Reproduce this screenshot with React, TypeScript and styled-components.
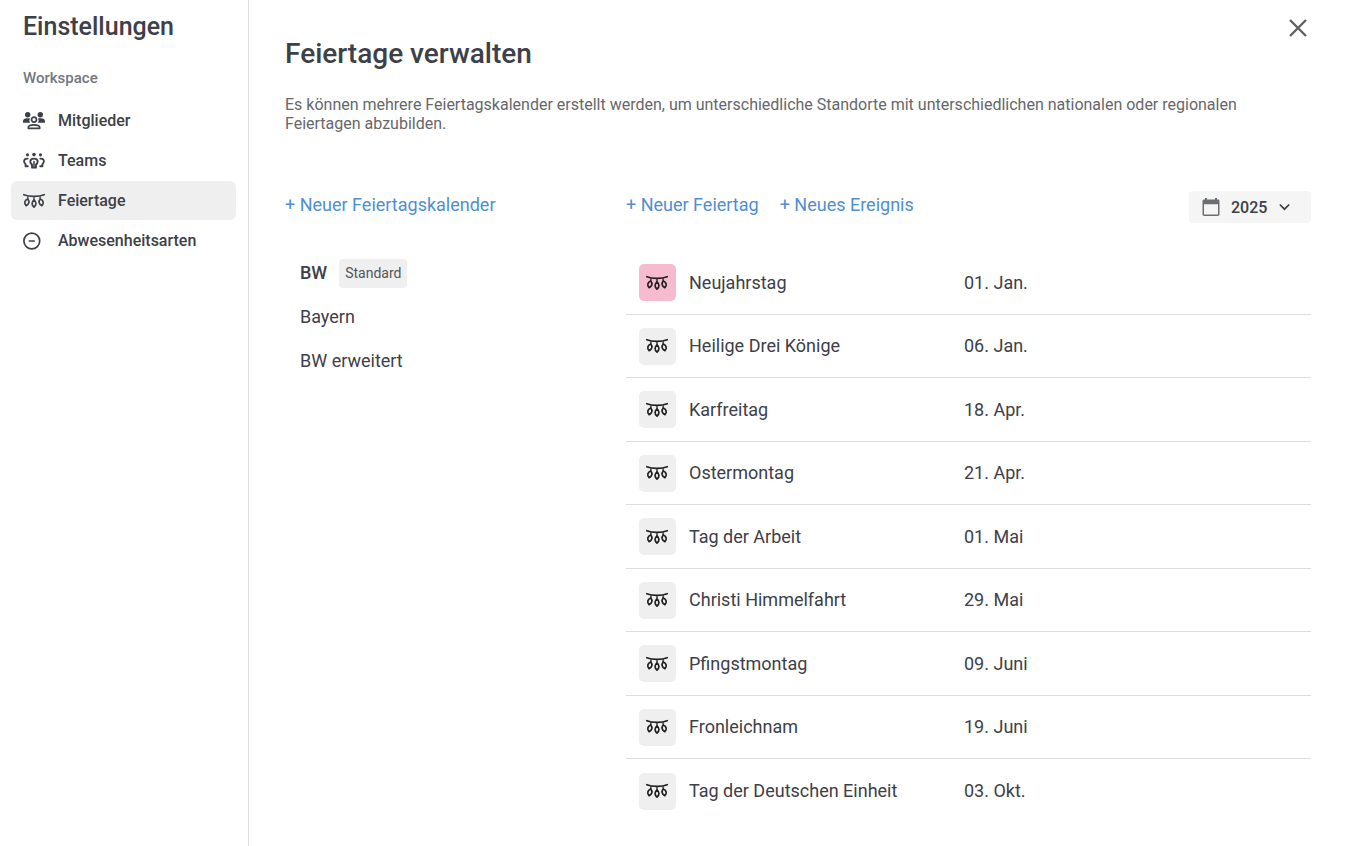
import React, { useState } from 'react';
import styled, { createGlobalStyle } from 'styled-components';

const GlobalStyle = createGlobalStyle`
  *, *::before, *::after { box-sizing: border-box; }
  body {
    margin: 0;
    background: #fff;
    color: #3d4048;
    font-family: Roboto, "Liberation Sans", sans-serif;
    font-size: 18px;
  }
  button, select { font: inherit; color: inherit; }
`;

const Page = styled.div`
  display: flex;
  min-height: 100vh;
`;

const Sidebar = styled.aside`
  flex: none;
  width: 249px;
  padding: 11px 12px 0 11px;
  border-right: 1px solid #dedede;
`;

const SidebarTitle = styled.h2`
  margin: 0;
  padding-left: 12px;
  font-size: 25px;
  font-weight: 500;
  line-height: 32px;
`;

const SectionLabel = styled.h3`
  margin: 25px 0 13px;
  padding-left: 12px;
  color: #74777e;
  font-size: 15px;
  font-weight: 500;
  line-height: 20px;
`;

const NavList = styled.ul`
  display: flex;
  flex-direction: column;
  gap: 1px;
  margin: 0;
  padding: 0;
  list-style: none;
`;

const NavLink = styled.a<{ $active?: boolean }>`
  display: flex;
  align-items: center;
  gap: 13px;
  height: 39px;
  padding: 0 12px;
  border-radius: 6px;
  background: ${({ $active }) => ($active ? '#efefef' : 'transparent')};
  color: inherit;
  font-size: 16px;
  font-weight: 500;
  line-height: 20px;
  text-decoration: none;
`;

const Main = styled.main`
  flex: 1;
  min-width: 0;
  padding: 16px 34px 24px 36px;
`;

const Header = styled.header`
  display: flex;
  align-items: flex-start;
  justify-content: space-between;
`;

const Title = styled.h1`
  margin: 20px 0 0;
  font-size: 28px;
  font-weight: 500;
  line-height: 36px;
`;

const CloseButton = styled.button`
  display: flex;
  padding: 0;
  border: 0;
  background: none;
  color: #616161;
  cursor: pointer;
`;

const Intro = styled.p`
  max-width: 1000px;
  margin: 23px 0 0;
  color: #66676b;
  font-size: 16px;
  line-height: 19px;
`;

const Columns = styled.div`
  display: flex;
  margin-top: 58px;
`;

const CalendarColumn = styled.section`
  flex: none;
  width: 341px;
`;

const HolidayColumn = styled.section`
  flex: 1;
  min-width: 0;
`;

const Toolbar = styled.div`
  display: flex;
  align-items: center;
  gap: 21px;
  height: 32px;
`;

const TextButton = styled.button`
  margin: 0 0 4px;
  padding: 0;
  border: 0;
  background: none;
  color: #4f8fd0;
  font-size: 18px;
  line-height: 24px;
  cursor: pointer;
`;

const YearPicker = styled.label`
  position: relative;
  margin-left: auto;
`;

const YearSelect = styled.select`
  display: block;
  width: 122px;
  height: 32px;
  padding: 0 42px;
  border: 0;
  border-radius: 4px;
  background: #f5f5f5;
  appearance: none;
  font-size: 16px;
  font-weight: 500;
`;

const PickerIcon = styled.span<{ $side: 'left' | 'right' }>`
  position: absolute;
  top: 0;
  ${({ $side }) => ($side === 'left' ? 'left: 12px;' : 'right: 21px;')}
  display: flex;
  align-items: center;
  height: 32px;
  pointer-events: none;
`;

const CalendarList = styled.ul`
  margin: 28px 0 0;
  padding: 0;
  list-style: none;
`;

const CalendarItem = styled.li`
  display: flex;
  align-items: center;
  gap: 12px;
  height: 44px;
  padding-left: 15px;
`;

const CalendarButton = styled.button<{ $selected?: boolean }>`
  padding: 0;
  border: 0;
  background: none;
  font-size: 18px;
  font-weight: ${({ $selected }) => ($selected ? 500 : 400)};
  line-height: 24px;
  cursor: pointer;
`;

const Badge = styled.span`
  padding: 0 6px;
  border-radius: 4px;
  background: #efefef;
  color: #52555c;
  font-size: 14px;
  line-height: 29px;
`;

const HolidayTable = styled.table`
  width: 100%;
  margin-top: 28px;
  border-collapse: separate;
  border-spacing: 0;
  table-layout: fixed;
`;

const IconCol = styled.col`
  width: 63px;
`;

const NameCol = styled.col`
  width: 275px;
`;

const HolidayRow = styled.tr`
  height: 64px;
  &:nth-child(even) { height: 63px; }
  &:not(:last-child) > td { border-bottom: 1px solid #dedede; }
`;

const Cell = styled.td`
  padding: 0;
  line-height: 24px;
  vertical-align: middle;
`;

const IconTile = styled.span<{ $highlight?: boolean }>`
  display: flex;
  align-items: center;
  justify-content: center;
  width: 37px;
  height: 37px;
  margin-left: 13px;
  padding-right: 1px;
  border-radius: 5px;
  background: ${({ $highlight }) => ($highlight ? '#f7bbd0' : '#efefef')};
  color: #212121;
`;

const MembersIcon = () => (
  <svg width="22" height="22" viewBox="0 0 22 22" fill="currentColor" aria-hidden="true">
    <circle cx="4.7" cy="4.7" r="2.7" />
    <circle cx="17.3" cy="4.7" r="2.7" />
    <path d="M0 12.8v-1.4C0 9.4 1.7 8.3 4 8.3h2.9a4.6 4.6 0 0 0 .3 4.5z" />
    <path d="M22 12.8v-1.4c0-2-1.7-3.1-4-3.1h-2.9a4.6 4.6 0 0 1-.3 4.5z" />
    <circle cx="11" cy="9.6" r="2.5" fill="none" stroke="currentColor" strokeWidth="1.7" />
    <path d="M5.3 18.3v-.8c0-1.7 2.2-2.7 5.7-2.7s5.7 1 5.7 2.7v.8z" fill="none" stroke="currentColor" strokeWidth="1.7" strokeLinejoin="round" />
  </svg>
);

const TeamsIcon = () => (
  <svg width="22" height="22" viewBox="0 0 22 22" fill="none" stroke="currentColor" strokeWidth="1.9" strokeLinecap="round" strokeLinejoin="round" aria-hidden="true">
    <g fill="currentColor" stroke="none">
      <circle cx="4.5" cy="4.8" r="1.6" />
      <circle cx="11" cy="4.6" r="1.8" />
      <circle cx="17.5" cy="4.8" r="1.6" />
    </g>
    <path d="M4.6 8.6C2.2 8.4 1.1 9.6 1.1 11.300c0 1.500.5 2.200 1.500 2.900v2.100h2.200" />
    <path d="M17.400 8.600c2.400-.2 3.500 1 3.500 2.700 0 1.500-.5 2.200-1.500 2.900v2.100h-2.200" />
    <path d="M11 8.600c-2.500 0-3.700 1.100-3.700 2.900 0 1.600.6 2.300 1.600 2.900l.2 3.200h3.800l.2-3.200c1-.6 1.600-1.300 1.600-2.900 0-1.800-1.200-2.900-3.700-2.900z" />
    <path d="M11 11.500v6" strokeWidth="1.500" />
  </svg>
);

const GarlandIcon = () => (
  <svg width="22" height="16" viewBox="0 0 22 16" fill="none" stroke="currentColor" strokeWidth="1.7" strokeLinecap="round" strokeLinejoin="round" aria-hidden="true">
    <path d="M.8 1.700C6 4 16 4 21.200 1.700" />
    <path d="M4.900 4v2M11 4.200v2.600M17.100 4v2" strokeWidth="1.3" />
    <path d="M4.700 6C6.800 8.400 6.300 11 3.100 12.700 .9 10.200 1.400 7.500 4.700 6z" />
    <path d="M11 6.800c2.600 2.300 2.600 5 0 7.400-2.600-2.400-2.600-5.100 0-7.400z" />
    <path d="M17.300 6c-2.100 2.400-1.600 5 1.600 6.700 2.200-2.500 1.700-5.200-1.600-6.700z" />
  </svg>
);

const AbsenceIcon = () => (
  <svg width="22" height="22" viewBox="0 0 22 22" fill="none" stroke="currentColor" strokeWidth="1.7" strokeLinecap="round" aria-hidden="true">
    <circle cx="8.8" cy="11" r="7.9" />
    <path d="M6.400 11h4.800" />
  </svg>
);

const CalendarIcon = () => (
  <svg width="20" height="20" viewBox="0 0 20 20" fill="#6b6e73" aria-hidden="true">
    <path fillRule="evenodd" d="M4 1h2v1.500h8V1h2v1.500h.8c1 0 1.700.7 1.700 1.700v13.100c0 1-.7 1.700-1.700 1.700H3.200c-1 0-1.700-.7-1.700-1.700V4.200c0-1 .7-1.700 1.700-1.700H4zM3 7.200v10.300h14V7.200z" />
  </svg>
);

const ChevronIcon = () => (
  <svg width="11" height="8" viewBox="0 0 11 8" fill="none" stroke="currentColor" strokeWidth="1.7" aria-hidden="true">
    <path d="M.8 1.500l4.700 4.700 4.700-4.700" />
  </svg>
);

const CloseIcon = () => (
  <svg width="26" height="24" viewBox="0 0 26 24" fill="none" stroke="currentColor" strokeWidth="2.4" aria-hidden="true">
    <path d="M5 4l16 16M21 4L5 20" />
  </svg>
);

const navItems = [
  { label: 'Mitglieder', Icon: MembersIcon },
  { label: 'Teams', Icon: TeamsIcon },
  { label: 'Feiertage', Icon: GarlandIcon, active: true },
  { label: 'Abwesenheitsarten', Icon: AbsenceIcon },
];

const calendars = [
  { name: 'BW', isDefault: true },
  { name: 'Bayern' },
  { name: 'BW erweitert' },
];

const holidays = [
  { name: 'Neujahrstag', date: '01. Jan.', highlight: true },
  { name: 'Heilige Drei Könige', date: '06. Jan.' },
  { name: 'Karfreitag', date: '18. Apr.' },
  { name: 'Ostermontag', date: '21. Apr.' },
  { name: 'Tag der Arbeit', date: '01. Mai' },
  { name: 'Christi Himmelfahrt', date: '29. Mai' },
  { name: 'Pfingstmontag', date: '09. Juni' },
  { name: 'Fronleichnam', date: '19. Juni' },
  { name: 'Tag der Deutschen Einheit', date: '03. Okt.' },
];

export default function App() {
  const [year, setYear] = useState('2025');
  const [selected, setSelected] = useState('BW');

  return (
    <>
      <GlobalStyle />
      <Page>
        <Sidebar>
          <SidebarTitle>Einstellungen</SidebarTitle>
          <SectionLabel>Workspace</SectionLabel>
          <nav>
            <NavList>
              {navItems.map(({ label, Icon, active }) => (
                <li key={label}>
                  <NavLink href="#" $active={active} aria-current={active ? 'page' : undefined}>
                    <Icon />
                    {label}
                  </NavLink>
                </li>
              ))}
            </NavList>
          </nav>
        </Sidebar>
        <Main>
          <Header>
            <Title>Feiertage verwalten</Title>
            <CloseButton type="button" aria-label="Schließen">
              <CloseIcon />
            </CloseButton>
          </Header>
          <Intro>
            Es können mehrere Feiertagskalender erstellt werden, um unterschiedliche Standorte mit
            unterschiedlichen nationalen oder regionalen Feiertagen abzubilden.
          </Intro>
          <Columns>
            <CalendarColumn>
              <Toolbar>
                <TextButton type="button">+ Neuer Feiertagskalender</TextButton>
              </Toolbar>
              <CalendarList>
                {calendars.map(({ name, isDefault }) => (
                  <CalendarItem key={name}>
                    <CalendarButton
                      type="button"
                      $selected={selected === name}
                      onClick={() => setSelected(name)}
                    >
                      {name}
                    </CalendarButton>
                    {isDefault && <Badge>Standard</Badge>}
                  </CalendarItem>
                ))}
              </CalendarList>
            </CalendarColumn>
            <HolidayColumn>
              <Toolbar>
                <TextButton type="button">+ Neuer Feiertag</TextButton>
                <TextButton type="button">+ Neues Ereignis</TextButton>
                <YearPicker>
                  <PickerIcon $side="left"><CalendarIcon /></PickerIcon>
                  <YearSelect aria-label="Jahr" value={year} onChange={(e) => setYear(e.target.value)}>
                    <option>2024</option>
                    <option>2025</option>
                    <option>2026</option>
                  </YearSelect>
                  <PickerIcon $side="right"><ChevronIcon /></PickerIcon>
                </YearPicker>
              </Toolbar>
              <HolidayTable>
                <colgroup>
                  <IconCol />
                  <NameCol />
                  <col />
                </colgroup>
                <tbody>
                  {holidays.map(({ name, date, highlight }) => (
                    <HolidayRow key={name}>
                      <Cell>
                        <IconTile $highlight={highlight}><GarlandIcon /></IconTile>
                      </Cell>
                      <Cell>{name}</Cell>
                      <Cell>{date}</Cell>
                    </HolidayRow>
                  ))}
                </tbody>
              </HolidayTable>
            </HolidayColumn>
          </Columns>
        </Main>
      </Page>
    </>
  );
}
